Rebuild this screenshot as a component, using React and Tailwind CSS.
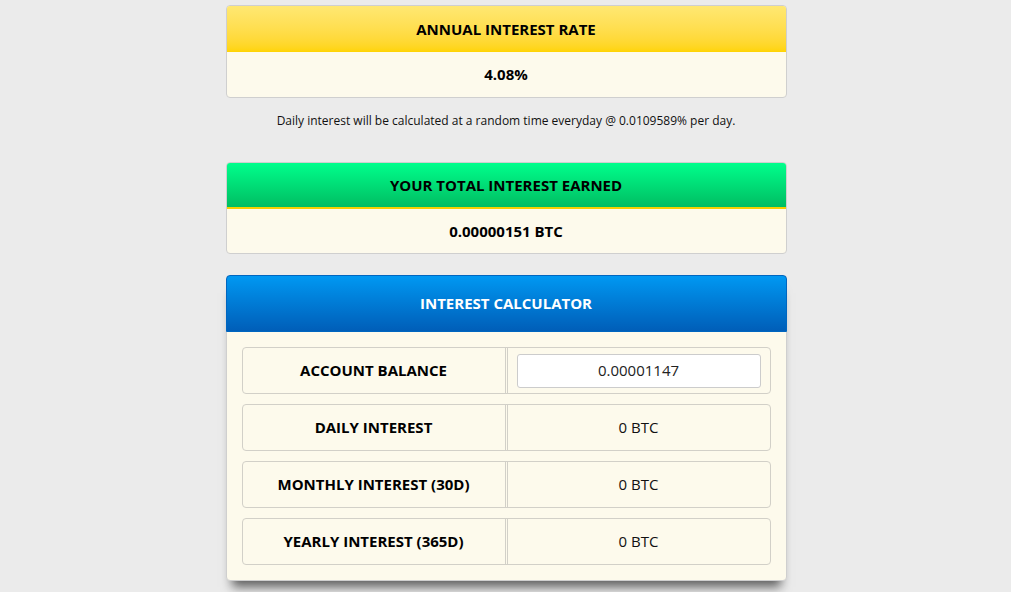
import React from "react";

function Card({ title, headerClass, children, extra = "" }) {
  return (
    <div className={`rounded-[4px] border border-[#cfcfcf] bg-[#fdfaec] overflow-hidden ${extra}`}>
      <div className={headerClass}>{title}</div>
      {children}
    </div>
  );
}

function Row({ label, children }) {
  return (
    <div className="flex h-[47px] rounded-[4px] border border-[#d2d0c8]">
      <div className="w-[263px] flex items-center justify-center border-r border-[#d2d0c8] font-bold text-[15px] text-black">
        {label}
      </div>
      <div className="flex-1 flex items-center justify-center border-l border-[#d2d0c8] ml-px text-[15px] text-[#111]">
        {children}
      </div>
    </div>
  );
}

export default function App() {
  return (
    <div
      className="min-h-[592px] w-full bg-[#ebebeb] overflow-hidden pl-px"
      style={{ fontFamily: '"Open Sans", "Liberation Sans", sans-serif' }}
    >
      <div className="w-[561px] mx-auto pt-[5px]">
        <Card
          title="ANNUAL INTEREST RATE"
          headerClass="h-[46px] flex items-center justify-center font-bold text-[15px] text-black bg-gradient-to-b from-[#ffe872] to-[#ffd400]"
        >
          <div className="h-[45px] flex items-center justify-center font-bold text-[15px] text-black">4.08%</div>
        </Card>
        <p className="text-center text-[12px] text-[#111] mt-[14px] leading-[17px]">
          Daily interest will be calculated at a random time everyday @ 0.0109589% per day.
        </p>
        <div className="mt-[33px]">
          <Card
            title="YOUR TOTAL INTEREST EARNED"
            headerClass="h-[46px] flex items-center justify-center font-bold text-[15px] text-black bg-gradient-to-b from-[#00ff8c] to-[#00bd62] border-b-2 border-[#f5d000]"
          >
            <div className="h-[44px] flex items-center justify-center font-bold text-[15px] text-black">0.00000151 BTC</div>
          </Card>
        </div>
        <div className="mt-[21px]">
          <div className="rounded-[4px] border border-[#cfcfcf] bg-[#fdfaec] shadow-[0_12px_10px_-6px_rgba(0,0,0,0.6)]">
            <div className="h-[57px] -mt-px -mx-px rounded-t-[4px] border border-[#0066c0] flex items-center justify-center font-bold text-[15px] text-white bg-gradient-to-b from-[#0098f2] to-[#005eb8]">
              INTEREST CALCULATOR
            </div>
            <div className="px-[15px] pt-[15px] pb-[15px] flex flex-col gap-[10px]">
              <Row label="ACCOUNT BALANCE">
                <div className="w-[244px] h-[34px] rounded-[3px] border border-[#cccccc] bg-white flex items-center justify-center text-[15px] text-[#222]">
                  0.00001147
                </div>
              </Row>
              <Row label="DAILY INTEREST">0 BTC</Row>
              <Row label="MONTHLY INTEREST (30D)">0 BTC</Row>
              <Row label="YEARLY INTEREST (365D)">0 BTC</Row>
            </div>
          </div>
        </div>
      </div>
    </div>
  );
}
